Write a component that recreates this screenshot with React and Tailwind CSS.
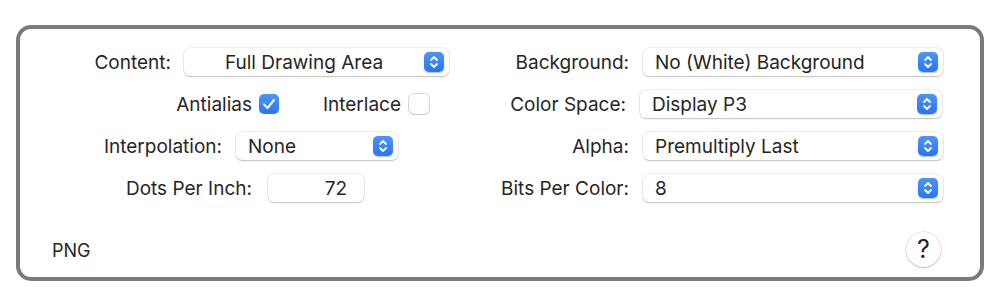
import React from 'react'

const font = { fontFamily: 'Inter, "Noto Sans", "Liberation Sans", sans-serif' }

function Stepper() {
  return (
    <span className="flex h-[20px] w-[20px] shrink-0 items-center justify-center rounded-[5px] bg-gradient-to-b from-[#4b94fb] to-[#2a75f3] shadow-[0_0.5px_1px_rgba(0,0,0,0.25)]">
      <svg width="10" height="14" viewBox="0 0 10 14" fill="none" stroke="white" strokeWidth="1.8" strokeLinecap="round" strokeLinejoin="round">
        <path d="M2 5 L5 2 L8 5" />
        <path d="M2 9 L5 12 L8 9" />
      </svg>
    </span>
  )
}

function Popup({ value, width, center }) {
  return (
    <div
      className="flex h-[28px] items-center rounded-[6px] bg-white pr-[5px] shadow-[0_0_0_0.5px_rgba(0,0,0,0.12),0_1px_1.5px_rgba(0,0,0,0.2)]"
      style={{ width }}
    >
      <span className={`flex-1 truncate pt-[2px] text-[19px] text-[#262626] ${center ? 'text-center' : 'pl-[12px]'}`}>
        {value}
      </span>
      <Stepper />
    </div>
  )
}

function Label({ children, w }) {
  return (
    <span className="shrink-0 pt-[2px] text-right text-[19px] text-[#262626]" style={{ width: w }}>
      {children}
    </span>
  )
}

function Checkbox({ checked }) {
  if (checked) {
    return (
      <span className="flex h-[20px] w-[20px] items-center justify-center rounded-[5px] bg-gradient-to-b from-[#4b94fb] to-[#2a75f3]">
        <svg width="14" height="12" viewBox="0 0 14 12" fill="none" stroke="white" strokeWidth="2" strokeLinecap="round" strokeLinejoin="round">
          <path d="M2 6.5 L5.5 10 L12 2" />
        </svg>
      </span>
    )
  }
  return (
    <span className="block h-[20px] w-[20px] rounded-[5px] bg-white shadow-[0_0_0_1px_rgba(0,0,0,0.16),0_1px_1px_rgba(0,0,0,0.06)]" />
  )
}

export default function App() {
  return (
    <div className="h-[300px] w-[1000px] bg-white pl-[16px] pt-[25px]" style={font}>
      <div className="h-[256px] w-[968px] rounded-[15px] border-4 border-[#7b7b7b] bg-white">
        <div className="flex pt-[12px]">
          {/* left column */}
          <div className="w-[450px]">
            <div className="flex h-[42px] items-center">
              <Label w="151px">Content:</Label>
              <div className="ml-[13px]">
                <Popup value="Full Drawing Area" width="265px" center />
              </div>
            </div>
            <div className="flex h-[42px] items-center">
              <Label w="232px">Antialias</Label>
              <span className="ml-[7px]"><Checkbox checked /></span>
              <Label w="122px">Interlace</Label>
              <span className="ml-[8px]"><Checkbox /></span>
            </div>
            <div className="flex h-[42px] items-center">
              <Label w="202px">Interpolation:</Label>
              <div className="ml-[14px]">
                <Popup value="None" width="162px" />
              </div>
            </div>
            <div className="flex h-[42px] items-center">
              <Label w="232px">Dots Per Inch:</Label>
              <div className="ml-[16px] flex h-[28px] w-[96px] items-center justify-end rounded-[6px] bg-white pr-[17px] pt-[2px] text-[19px] text-[#262626] shadow-[0_0_0_0.5px_rgba(0,0,0,0.12),0_1px_1.5px_rgba(0,0,0,0.2)]">
                72
              </div>
            </div>
          </div>

          {/* right column */}
          <div className="flex-1">
            <div className="flex h-[42px] items-center">
              <Label w="159px">Background:</Label>
              <div className="ml-[14px]">
                <Popup value="No (White) Background" width="300px" />
              </div>
            </div>
            <div className="flex h-[42px] items-center">
              <Label w="156px">Color Space:</Label>
              <div className="ml-[14px]">
                <Popup value="Display P3" width="302px" />
              </div>
            </div>
            <div className="flex h-[42px] items-center">
              <Label w="159px">Alpha:</Label>
              <div className="ml-[14px]">
                <Popup value="Premultiply Last" width="300px" />
              </div>
            </div>
            <div className="flex h-[42px] items-center">
              <Label w="159px">Bits Per Color:</Label>
              <div className="ml-[14px]">
                <Popup value="8" width="300px" />
              </div>
            </div>
          </div>
        </div>

        <div className="mt-[23px] flex items-center justify-between pl-[32px] pr-[39px]">
          <span className="pt-[1px] text-[18px] text-[#262626]">PNG</span>
          <button className="flex h-[35px] w-[35px] items-center justify-center rounded-full bg-white text-[25px] text-[#262626] shadow-[0_0_0_0.5px_rgba(0,0,0,0.15),0_1px_2px_rgba(0,0,0,0.2)]">
            ?
          </button>
        </div>
      </div>
    </div>
  )
}
